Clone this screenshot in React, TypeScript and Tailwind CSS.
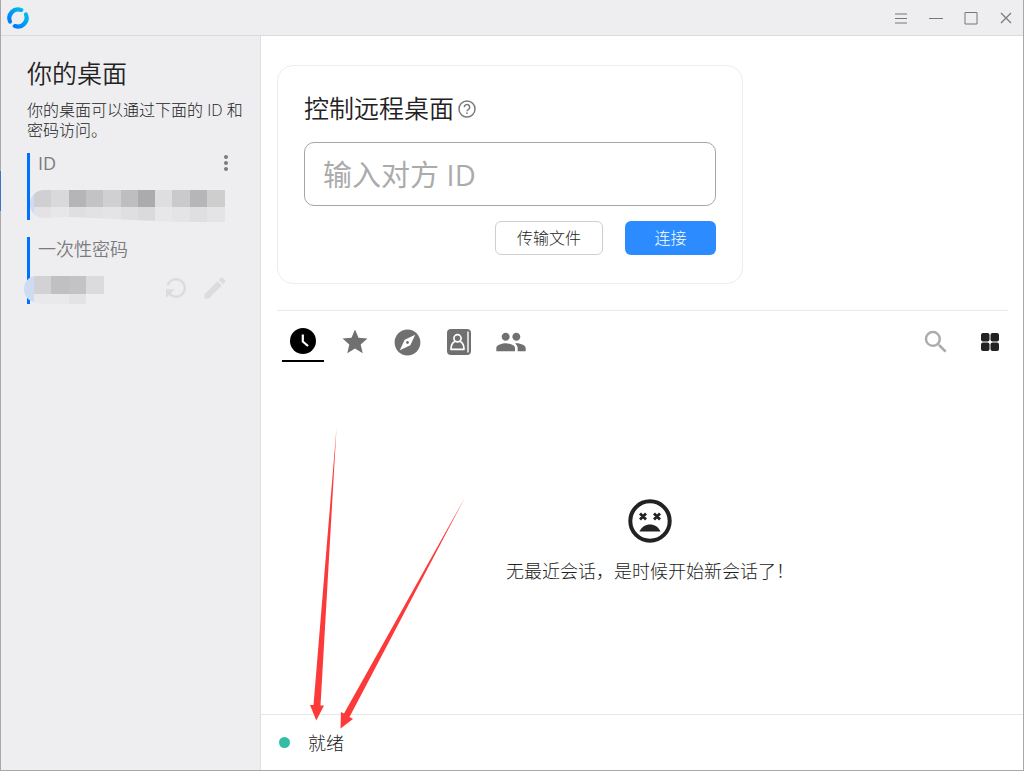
import React from "react";
import { MdStar, MdPeople, MdSearch, MdExplore, MdEdit, MdMoreVert, MdRefresh } from "react-icons/md";

const Logo: React.FC = () => {
  return (
    <svg viewBox="0 0 32 32" className="size-[22px]" fill="none" aria-hidden="true">
      <defs>
        <linearGradient id="logo" x1="4" y1="28" x2="28" y2="4" gradientUnits="userSpaceOnUse">
          <stop stopColor="#0070ff" />
          <stop offset="1" stopColor="#00c6e8" />
        </linearGradient>
      </defs>
      <path
        d="M22 1.8A15.4 15.4 0 0 0 1.8 22.3c.3 1.9 2.3 2.7 4 1.6 1.5-1 1.7-2.2 1.5-3.6A9.8 9.8 0 0 1 19.5 7.2c2 .2 3.5-.6 4.2-2.2.6-1.5 0-2.6-1.7-3.2z"
        fill="url(#logo)"
      />
      <path
        d="M10 30.2A15.4 15.4 0 0 0 30.2 9.7c-.3-1.9-2.3-2.7-4-1.6-1.5 1-1.7 2.2-1.5 3.6a9.8 9.8 0 0 1-12.2 13.1c-2-.2-3.5.6-4.2 2.2-.6 1.5 0 2.6 1.7 3.2z"
        fill="url(#logo)"
      />
    </svg>
  );
};

const TitleBar: React.FC = () => {
  return (
    <header className="flex h-9 items-center justify-between border-b border-[#dadadc] bg-[#eeeef0] pl-1.5">
      <Logo />
      <div className="flex text-[#77777a]">
        <button aria-label="菜单" className="flex h-8 w-[35px] items-center justify-center">
          <svg viewBox="0 0 14 14" className="size-3.5" stroke="currentColor">
            <path d="M1 3h12M1 7.5h12M1 12h12" />
          </svg>
        </button>
        <button aria-label="最小化" className="flex h-8 w-[35px] items-center justify-center">
          <svg viewBox="0 0 14 14" className="size-3.5" stroke="currentColor">
            <path d="M0 7.5h14" />
          </svg>
        </button>
        <button aria-label="最大化" className="flex h-8 w-[35px] items-center justify-center">
          <svg viewBox="0 0 14 14" className="size-3.5" fill="none" stroke="currentColor">
            <path d="M1 1.5h12v11.5h-12z" />
          </svg>
        </button>
        <button aria-label="关闭" className="flex h-8 w-[35px] items-center justify-center">
          <svg viewBox="0 0 14 14" className="size-3.5" stroke="currentColor" strokeWidth="1.2">
            <path d="M2 2l10 10M12 2L2 12" />
          </svg>
        </button>
      </div>
    </header>
  );
};

const idTop = ["#d0d0d2", "#d9d9db", "#b5b5b7", "#c3c3c5", "#d0d0d2", "#bebec0", "#ababad", "#dedee0", "#cacacc", "#b6b6b8", "#cececf"];
const idBottom = ["#e3e3e5", "#e7e7e9", "#dfdfe1", "#e2e2e4", "#e4e4e6", "#dfdfe1", "#dadadc", "#e7e7e9", "#e4e4e6", "#dfdfe1", "#e4e4e6"];
const pwTop = ["#d2d2d4", "#c0c0c2", "#c3c3c5", "#dbdbdd"];
const pwBottom = ["#e9e9eb", "#e9e9eb", "#e3e3e5", "#ebebed"];

const HiddenId: React.FC = () => {
  return (
    <svg viewBox="0 0 195 32" className="h-8 w-[195px]" aria-hidden="true">
      <clipPath id="id-shape">
        <path d="M14 0h181v32h-46L82 29 40 27 14 28A14 14 0 0 1 14 0z" />
      </clipPath>
      <g clipPath="url(#id-shape)" shapeRendering="crispEdges">
        <rect width="5" height="32" fill="#cbdcf3" />
        {idTop.map((c, i) => (
          <rect key={i} x={4 + i * 17.3} width="18" height="17" fill={c} />
        ))}
        {idBottom.map((c, i) => (
          <rect key={i} x={4 + i * 17.3} y="17" width="18" height="15" fill={c} />
        ))}
      </g>
    </svg>
  );
};

const HiddenPassword: React.FC = () => {
  return (
    <svg viewBox="0 0 80 30" className="h-[30px] w-20" aria-hidden="true">
      <clipPath id="pw-shape">
        <path d="M12 0h68v18H62v10H20C6 27 0 22 0 13 0 6 5 0 12 0z" />
      </clipPath>
      <g clipPath="url(#pw-shape)" shapeRendering="crispEdges">
        <rect width="11" height="30" fill="#cbdcf3" />
        {pwTop.map((c, i) => (
          <rect key={i} x={10 + i * 17.3} width="18" height="18" fill={c} />
        ))}
        {pwBottom.map((c, i) => (
          <rect key={i} x={10 + i * 17.3} y="18" width="18" height="12" fill={c} />
        ))}
      </g>
    </svg>
  );
};

const Sidebar: React.FC = () => {
  return (
    <aside className="w-[260px] shrink-0 border-r border-[#dedee0] bg-[#eeeef0] pt-[19px] pr-4 pl-[26px]">
      <h1 className="text-[25px] leading-9 font-[350]">你的桌面</h1>
      <p className="mt-[9px] text-base leading-5">你的桌面可以通过下面的 ID 和密码访问。</p>
      <section className="mt-[13px] h-[67px] border-l-3 border-[#0071ff]">
        <div className="flex h-5 items-center justify-between pr-1.5 pl-2 text-[#7b7b7d]">
          <h2 className="text-lg leading-6 font-normal">ID</h2>
          <button aria-label="更多">
            <MdMoreVert className="size-6" />
          </button>
        </div>
        <div className="mt-[17px]">
          <HiddenId />
        </div>
      </section>
      <section className="mt-[17px] h-[67px] border-l-3 border-[#0071ff]">
        <div className="flex h-6 items-center pl-2 text-[#7b7b7d]">
          <h2 className="text-lg leading-6 font-[350]">一次性密码</h2>
        </div>
        <div className="-ml-1.5 flex items-start pt-[15px]">
          <HiddenPassword />
          <div className="ml-auto flex h-6 items-center gap-2.5 pr-[15px] text-[#dcdcde]">
            <button aria-label="刷新">
              <MdRefresh className="size-[30px] rotate-180" />
            </button>
            <button aria-label="编辑">
              <MdEdit className="size-7" />
            </button>
          </div>
        </div>
      </section>
    </aside>
  );
};

const ConnectCard: React.FC = () => {
  return (
    <form className="mt-[29px] w-[466px] rounded-[16px] border border-[#ededed] px-[26px] pt-6 pb-7">
      <div className="flex items-center gap-1">
        <label htmlFor="peer" className="text-[25px] leading-9 font-[350]">
          控制远程桌面
        </label>
        <svg viewBox="0 0 18 18" className="mt-0.5 size-[18px]" fill="none" stroke="#7a7a7a" strokeWidth="1.5" aria-hidden="true">
          <circle cx="9" cy="9" r="8" />
          <path d="M6.3 7.2a2.7 2.7 0 1 1 4.2 2.2C9.5 10.1 9 10.4 9 11.3" />
          <path d="M9 12.6v1.5" />
        </svg>
      </div>
      <input
        id="peer"
        type="text"
        placeholder="输入对方 ID"
        className="mt-4 h-16 w-full rounded-[10px] border border-[#a6a6a6] px-[18px] text-[29px] font-normal outline-none placeholder:text-[#ababab]"
      />
      <div className="mt-[15px] flex justify-end gap-[22px]">
        <button type="button" className="h-[34px] w-27 rounded-md border border-[#cfcfcf] text-base">
          传输文件
        </button>
        <button type="button" className="h-[34px] w-[91px] rounded-md bg-[#2c8cff] text-base text-white">
          连接
        </button>
      </div>
    </form>
  );
};

const Tabs: React.FC = () => {
  return (
    <div className="mr-[15px] flex items-start justify-between border-t border-[#ebebeb] pt-[15px]">
      <nav className="flex gap-2.5 pl-[5px] text-[#707070]">
        <button aria-label="最近会话" className="flex h-9 w-[42px] items-center justify-center border-b-2 border-black pb-1 text-black">
          <svg viewBox="0 0 26 26" className="size-[26px]">
            <circle cx="13" cy="13" r="13" fill="currentColor" />
            <path d="M12.8 6.5v7l5.2 4.5" fill="none" stroke="#fff" strokeWidth="2.2" />
          </svg>
        </button>
        <button aria-label="收藏" className="flex h-9 w-[42px] items-center justify-center pb-1">
          <MdStar className="size-[30px]" />
        </button>
        <button aria-label="已发现" className="flex h-9 w-[42px] items-center justify-center pb-1">
          <MdExplore className="size-[31px]" />
        </button>
        <button aria-label="地址簿" className="flex h-9 w-[42px] items-center justify-center pb-1">
          <svg viewBox="0 0 26 26" className="size-[26px]" fill="none" stroke="#fff" strokeWidth="1.7">
            <rect x="1" y="0" width="24" height="26" rx="4" fill="currentColor" stroke="none" />
            <path d="M22 2.5v21" strokeWidth="1.4" />
            <circle cx="11.5" cy="9.3" r="3.6" />
            <path d="M8.8 12.5C6.2 13.700 5 16 5 20.300h13c0-4.300-1.200-6.600-3.800-7.800" strokeLinejoin="round" />
          </svg>
        </button>
        <button aria-label="设备组" className="flex h-9 w-[42px] items-center justify-center pb-1">
          <MdPeople className="size-8" />
        </button>
      </nav>
      <div className="flex gap-6 pr-1">
        <button aria-label="搜索" className="flex size-8 items-center justify-center text-[#ababab]">
          <MdSearch className="size-[30px]" />
        </button>
        <button aria-label="视图" className="flex size-7 items-center justify-center pt-1 text-[#222]">
          <svg viewBox="0 0 18 18" className="size-[18px]" fill="currentColor">
            <rect width="8.5" height="8.5" rx="2" />
            <rect x="9.5" width="8.5" height="8.5" rx="2" />
            <rect y="9.5" width="8.5" height="8.5" rx="2" />
            <rect x="9.5" y="9.5" width="8.5" height="8.5" rx="2" />
          </svg>
        </button>
      </div>
    </div>
  );
};

const EmptyState: React.FC = () => {
  return (
    <div className="flex flex-1 flex-col items-center justify-center gap-3.5 pt-2">
      <svg viewBox="0 0 44 44" className="size-11" fill="none" stroke="#222" aria-hidden="true">
        <circle cx="22" cy="22" r="19.7" strokeWidth="4" />
        <path d="M12 14.5l6 6M18 14.5l-6 6M26 14.5l6 6M32 14.5l-6 6" strokeWidth="2.8" />
        <path d="M11.5 32.5C13.5 28 17.5 25.5 22 25.5s8.5 2.5 10.5 7z" fill="#222" stroke="none" />
      </svg>
      <p className="text-lg leading-7">无最近会话，是时候开始新会话了！</p>
    </div>
  );
};

const StatusBar: React.FC = () => {
  return (
    <footer className="flex h-14 items-center gap-[18px] border-t border-[#e6e6e6] pl-[18px]">
      <span className="size-[11px] rounded-full bg-[#32bea6]" />
      <span className="text-lg leading-7">就绪</span>
    </footer>
  );
};

// red pointers drawn over the window, both aimed at the status text
const Arrows: React.FC = () => {
  return (
    <svg
      viewBox="0 0 160 310"
      className="pointer-events-none absolute bottom-[37px] left-[49px] h-[310px] w-40"
      fill="#fd3a3a"
      aria-hidden="true"
    >
      <path d="M26.5 5L10.5 282.5h3.5L6.3 297.5 0 282h3.5z" />
      <path d="M155 74.5L39.5 294l3.5 2L30.5 305.5 31 289l3 1.5z" />
    </svg>
  );
};

export default function App() {
  return (
    <div className="relative flex min-h-screen flex-col border-x border-b border-[#a8a8a8] bg-white font-['Open_Sans','Noto_Sans_CJK_SC',sans-serif] font-light text-[#222]">
      <TitleBar />
      <div className="flex flex-1">
        <Sidebar />
        <main className="relative flex min-w-0 flex-1 flex-col">
          <div className="flex flex-1 flex-col pl-4">
            <ConnectCard />
            <div className="h-[26px]" />
            <Tabs />
            <EmptyState />
          </div>
          <StatusBar />
          <Arrows />
        </main>
      </div>
      {/* sliver of the window behind */}
      <div className="absolute top-[171px] -left-px h-10 w-px bg-[#3d76c4]" />
    </div>
  );
}
